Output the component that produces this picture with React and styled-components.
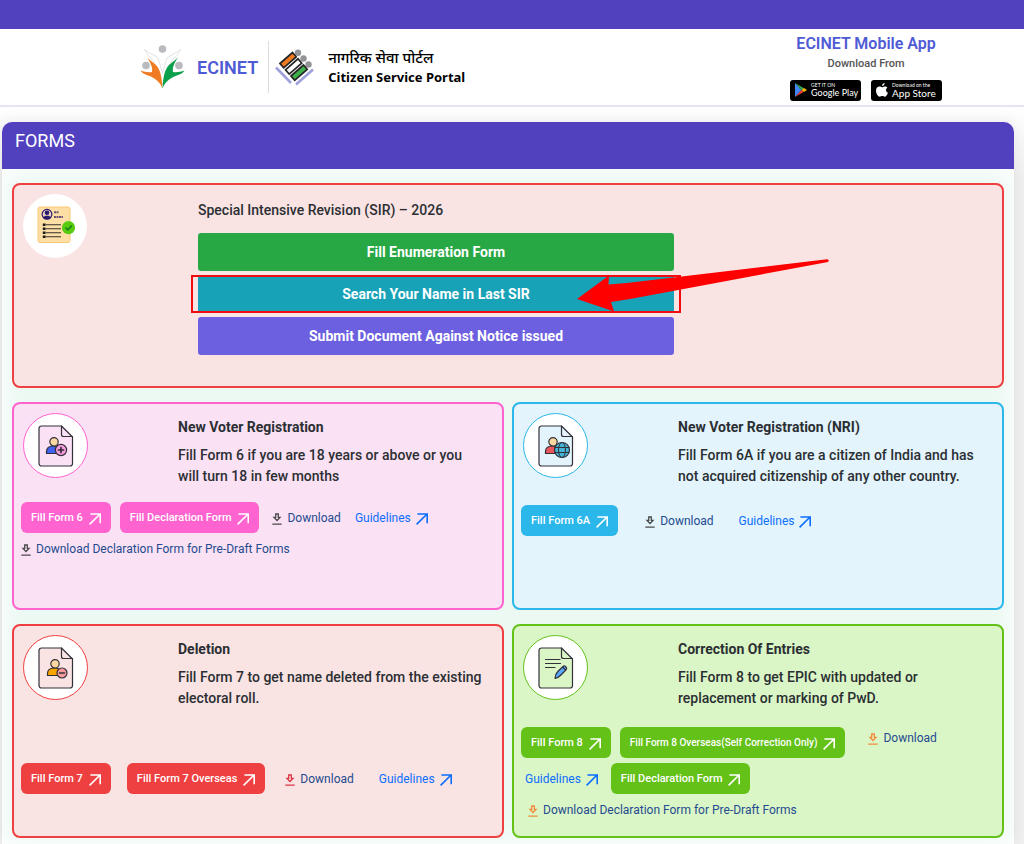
import React from "react";
import styled, { createGlobalStyle } from "styled-components";

const Global = createGlobalStyle`
  *, *::before, *::after { box-sizing: border-box; }
  body { margin: 0; background: linear-gradient(#fff 107px, #f0f0f0 180px) #f0f0f0; font-family: Roboto, "Liberation Sans", sans-serif; color: #2b2f33; }
  h1, h2, h3, p { margin: 0; }
  a { text-decoration: none; }
  svg { display: block; flex: none; }
`;

const TopBar = styled.div`
  height: 29px;
  background: #5141bf;
`;

const Header = styled.header`
  display: flex;
  justify-content: space-between;
  align-items: center;
  height: 78px;
  padding: 0 8% 0 140px;
  background: #fff;
  border-bottom: 2px solid #e4e4f2;
`;

const Brand = styled.div`
  display: flex;
  align-items: center;
`;

const BrandName = styled.a`
  display: flex;
  align-items: center;
  gap: 12px;
  height: 52px;
  padding-right: 10px;
  border-right: 1px solid #dcdce4;
  color: #4f5bd5;
  font-size: 18px;
  font-weight: 600;
`;

const Portal = styled.div`
  display: flex;
  align-items: center;
  gap: 14px;
  padding-left: 6px;
  color: #000;
`;

const PortalText = styled.div`
  font-family: "Noto Sans", "Liberation Sans", sans-serif;
  font-size: 13px;
  line-height: 20px;
  font-weight: 700;
`;

const Hindi = styled.p`
  font-size: 15px;
  font-weight: 500;
`;

const MobileApp = styled.div`
  display: flex;
  flex-direction: column;
  align-items: center;
  color: #555;
  font-size: 11px;
  line-height: 20px;
  font-weight: 500;
`;

const AppTitle = styled.h2`
  color: #4f5bd5;
  font-size: 16px;
  line-height: 20px;
  font-weight: 600;
`;

const Badges = styled.div`
  display: flex;
  gap: 10px;
  margin-top: 6px;
`;

const Badge = styled.a`
  display: flex;
  align-items: center;
  gap: 4px;
  width: 71px;
  height: 21px;
  padding-left: 5px;
  border-radius: 3px;
  background: #000;
  color: #fff;
  font-family: Lato, sans-serif;
  font-size: ${(p) => (p.$compact ? 9 : 10)}px;
  font-weight: 400;
  line-height: 10px;
  white-space: nowrap;
`;

const BadgeSmall = styled.span`
  display: block;
  font-size: 5px;
  line-height: 6px;
`;

const Panel = styled.main`
  margin: 15px 10px 0 2px;
  border-radius: 10px 10px 0 0;
  overflow: hidden;
  box-shadow: 0 0 16px rgba(0, 0, 0, 0.08);
`;

const PanelHead = styled.div`
  height: 47px;
  padding: 9px 13px;
  background: #5141bf;
  color: #fff;
`;

const PanelTitle = styled.h1`
  font-size: 18px;
  line-height: 20px;
  font-weight: 400;
`;

const PanelBody = styled.div`
  display: grid;
  grid-template-columns: 1fr 1fr;
  gap: 14px 8px;
  padding: 14px 10px 6px;
  background: #ecf9f3;
  box-shadow: inset 0 0 30px #fff;
`;

const Card = styled.section`
  min-height: ${(p) => p.$height}px;
  grid-column: ${(p) => (p.$wide ? "1 / -1" : "auto")};
  padding: 9px 7px;
  border: 2px solid ${(p) => p.$line};
  border-radius: 8px;
  background: ${(p) => p.$fill};
`;

const CardTop = styled.div`
  display: grid;
  grid-template-columns: ${(p) => p.$first}px 1fr;
  padding-left: 2px;
`;

const Circle = styled.div`
  display: grid;
  place-items: center;
  width: ${(p) => p.$size}px;
  height: ${(p) => p.$size}px;
  border-radius: 50%;
  border: 1px solid ${(p) => p.$line};
  background: #fff;
`;

const CardText = styled.div`
  display: flex;
  flex-direction: column;
  gap: 7px;
  padding: ${(p) => p.$top || 4}px 10px 0 0;
  font-size: 14px;
  line-height: 21px;
  font-weight: 500;
`;

const CardTitle = styled.h3`
  font-size: 14px;
  line-height: 21px;
  font-weight: ${(p) => (p.$light ? 500 : 700)};
`;

const SirStack = styled.div`
  display: flex;
  flex-direction: column;
  gap: 4px;
  width: 100%;
  max-width: 476px;
  margin-top: 5px;
`;

const SirButton = styled.button`
  width: 100%;
  height: 38px;
  border: 0;
  border-radius: 3px;
  background: ${(p) => p.$bg};
  color: #fff;
  font: 700 14px/21px Roboto, sans-serif;
`;

const Marked = styled.div`
  position: relative;
`;

const Outline = styled.span`
  position: absolute;
  inset: 0 -7px;
  border: 2px solid #f00b10;
  pointer-events: none;
`;

const Arrow = styled.svg`
  position: absolute;
  top: -17px;
  right: -157px;
  pointer-events: none;
`;

const Actions = styled.div`
  display: flex;
  flex-direction: column;
  gap: 5px;
  margin-top: ${(p) => p.$top}px;
`;

const Row = styled.div`
  display: flex;
  align-items: ${(p) => (p.$raised ? "flex-start" : "center")};
  gap: 9px;
`;

const FormButton = styled.button`
  display: flex;
  align-items: center;
  gap: 6px;
  height: 31px;
  margin-left: ${(p) => p.$lead || 0}px;
  padding: 0 10px;
  border: 0;
  border-radius: 6px;
  background: ${(p) => p.$bg};
  color: #fff;
  font: 500 ${(p) => (p.$small ? 10 : 11)}px/16px Roboto, sans-serif;
  white-space: nowrap;
`;

const TextLink = styled.a`
  display: flex;
  align-items: center;
  gap: 5px;
  margin-left: ${(p) => p.$lead || 0}px;
  color: ${(p) => (p.$bright ? "#0d6efd" : "#244b8f")};
  font-size: 12px;
  line-height: 22px;
  white-space: nowrap;
`;

const OutSvg = styled.svg`
  margin-top: 2px;
`;

const DownSvg = styled.svg`
  margin-top: 2px;
`;

const ArrowOut = () => (
  <OutSvg width="12" height="12" viewBox="0 0 12 12" fill="none" stroke="currentColor" strokeWidth="1.6">
    <path d="M.6 11.400 10.800 1.200M1.400 1h9.800v9.200" />
  </OutSvg>
);

const DownIcon = ({ color }) => (
  <DownSvg width="10" height="12" viewBox="0 0 10 12" fill="none" stroke={color} strokeWidth="1.3">
    <path d="M3.700 1h2.600v3.400h1.700L5 7.500 2 4.400h1.700zM.3 11.200h9.400" />
  </DownSvg>
);

const FileIcon = ({ tint, children }) => (
  <svg width="36" height="42" viewBox="0 0 36 42" fill="none" stroke="#33303a" strokeWidth="1.2" strokeLinejoin="round" strokeLinecap="round">
    <path d="M3.500 1h20L34.500 12v26.500a2.500 2.500 0 0 1-2.500 2.500H3.500A2.500 2.500 0 0 1 1 38.500V3.500A2.500 2.500 0 0 1 3.500 1z" fill={tint} />
    <path d="M23.500 1v8.500a2 2 0 0 0 2 2h9" />
    {children}
  </svg>
);

const Person = ({ body, x = 0 }) => (
  <g transform={`translate(${x} 0)`}>
    <path d="M8.500 28.500v-2c0-3.500 2.800-5.500 7-5.500s7 2 7 5.500v2z" fill={body} />
    <circle cx="16" cy="16.800" r="4.200" fill="#fbd9a0" />
  </g>
);

const AddVoter = () => (
  <FileIcon tint="#fbe1f4">
    <Person body="#3f62f0" />
    <circle cx="23" cy="25" r="5.600" fill="#f79bdc" />
    <path d="M20.500 25h5M23 22.500v5" strokeWidth="1.700" />
  </FileIcon>
);

const GlobeVoter = () => (
  <FileIcon tint="#e3f4fc">
    <Person body="#e9555a" x={-1} />
    <circle cx="24" cy="25" r="7.500" fill="#45b5d8" />
    <ellipse cx="24" cy="25" rx="3.500" ry="7.500" strokeWidth="1" />
    <path d="M17 22.500h14M17 27.500h14" strokeWidth="1" />
  </FileIcon>
);

const RemoveVoter = () => (
  <FileIcon tint="#fae3e3">
    <Person body="#f8a500" x={1} />
    <circle cx="24" cy="26" r="5" fill="#f89b9b" />
    <path d="M21.500 26h5" strokeWidth="1.500" />
  </FileIcon>
);

const EditEntries = () => (
  <FileIcon tint="#dbf6c6">
    <path d="M7.500 12.500H22M7.500 16.500h15M7.500 20.500H17" />
    <path d="M17 31.500c0-3 .8-5 2.800-7l5.200-5c1.500-1.500 4.800 1 3.300 3L23 28c-2 2-3.500 3-6 3.500zM24.500 20l3.200 3" fill="#5aa9f8" />
  </FileIcon>
);

const SirDoc = () => (
  <svg width="44" height="40" viewBox="-4 0 44 40">
    <rect x="1" y="1" width="32" height="35.500" rx="2" fill="#fddfa5" stroke="#fbc875" />
    <circle cx="10" cy="8.300" r="4.900" fill="#e9d3bd" stroke="#2a1a70" strokeWidth="1.200" />
    <circle cx="10" cy="6.700" r="2.300" fill="#2a1a70" />
    <path d="M6 11.500c1-2.500 7-2.500 8 0-2 2.300-6 2.300-8 0z" fill="#2a1a70" />
    <path d="M17 6.200h5M17 11h9" stroke="#6c5276" strokeWidth="2" strokeDasharray="2 .5" />
    <path d="M9 18.700h15M9 22.700h15M9 26.700h15M9 30.700h15" stroke="#33302c" strokeWidth="1.100" />
    <path d="M5.800 18.700h2.800M5.800 22.700h2.800M5.800 26.700h2.800M5.800 30.700h2.800" stroke="#1d1b19" strokeWidth="2.600" />
    <circle cx="31.500" cy="21.700" r="6.600" fill="#58cb10" />
    <path d="m28.500 21.500 2.300 2.300 4-4.200" fill="none" stroke="#17801a" strokeWidth="1.600" />
  </svg>
);

const EcinetLogo = () => (
  <svg width="45" height="44" viewBox="0 0 45 44">
    <g fill="#b9bbbe">
      <circle cx="22.500" cy="4" r="3.800" />
      <circle cx="6" cy="20.500" r="3.800" />
      <circle cx="39" cy="20.500" r="3.800" />
    </g>
    <path d="M4.500 4.500c5 4.500 10 5 13.500 8.500L22.500 28 27 13c3.500-3.500 8.500-4 13.500-8.500-3 7-8.500 9-10.500 15l-7.500 20-7.500-20c-2-6-7.500-8-10.500-15z" fill="#fff" stroke="#dcdcdc" strokeWidth=".8" />
    <path d="M7 12c4 5 9 6.500 11.500 11.500C21 28 22 35 22.500 43.500 20 37.500 16 33.500 9.500 31 5.500 29.500 3 29 .5 25.500c4 1.500 8 2 11.500 1.500 1-6-2.500-10-5-15z" fill="#ef7c22" />
    <path d="M38 12c-4 5-9 6.500-11.500 11.500C24 28 23 35 22.500 43.500c2.500-6 6.500-10 13-12.500 4-1.500 6.500-2 9-5.500-4 1.500-8 2-11.500 1.500-1-6 2.500-10 5-15z" fill="#0ba04b" />
  </svg>
);

const EciLogo = () => (
  <svg width="39" height="37" viewBox="0 0 39 37">
    <g fill="#929497">
      <circle cx="23" cy="3.800" r="3.200" />
      <circle cx="28.500" cy="9.500" r="3.200" />
      <circle cx="33.500" cy="15.500" r="3.200" />
    </g>
    <g stroke="#262626" strokeWidth="1.700">
      <path d="m5 14.500 12.500-11 3.700 4.300L8.700 18.800z" fill="#f07a20" />
      <path d="m10.500 20.800 12.500-11 3.700 4.300-12.500 11z" fill="#fff" />
      <path d="m16 27 12.500-11 3.700 4.300-12.500 11z" fill="#3faf4a" />
    </g>
    <path d="M1 18.500 16 34M21 35.500l17-15" stroke="#9fa1da" strokeWidth="2.600" />
  </svg>
);

const PlayMark = () => (
  <svg width="12" height="14" viewBox="0 0 12 14">
    <path d="M0 0v14l6.500-7z" fill="#4285f4" />
    <path d="M0 0l9 5.200L6.500 7z" fill="#34a853" />
    <path d="M9 5 12 7 9 9 6.500 7z" fill="#fbbc04" />
    <path d="M0 14l9-5.200L6.500 7z" fill="#ea4335" />
  </svg>
);

const AppleMark = () => (
  <svg width="12" height="14" viewBox="0 0 12 14" fill="#fff">
    <path d="M8.700 0c.1 1.500-1.200 3-2.700 3C5.900 1.500 7.200.2 8.700 0zM11.400 4.800c-2 1.200-1.700 4 .5 4.900C11.300 11.500 10 13.700 8.800 13.700c-1 0-1.300-.6-2.500-.6s-1.600.6-2.500.6C2 13.700 0 10.500 0 7.700 0 5 1.700 3.600 3.400 3.600c1.100 0 2 .7 2.700.7.700 0 1.700-.8 3-.8.900 0 1.700.4 2.300 1.300z" />
  </svg>
);

const Fill = ({ bg, lead, small, children }) => (
  <FormButton type="button" $bg={bg} $lead={lead} $small={small}>
    {children}
    <ArrowOut />
  </FormButton>
);

const Download = ({ color, lead, children = "Download" }) => (
  <TextLink href="#download" $lead={lead}>
    <DownIcon color={color} />
    {children}
  </TextLink>
);

const Guidelines = ({ lead }) => (
  <TextLink href="#guidelines" $bright $lead={lead}>
    Guidelines
    <ArrowOut />
  </TextLink>
);

const FormCard = ({ height, line, fill, icon, title, text, top, children }) => (
  <Card $height={height} $line={line} $fill={fill}>
    <CardTop $first={155}>
      <Circle $size={65} $line={line}>{icon}</Circle>
      <CardText>
        <CardTitle>{title}</CardTitle>
        <p>{text}</p>
      </CardText>
    </CardTop>
    <Actions $top={top}>{children}</Actions>
  </Card>
);

const PINK = "#ff63cf";
const BLUE = "#2bb7e9";
const RED = "#ef4041";
const GREEN = "#63c118";

export default function App() {
  return (
    <>
      <Global />
      <TopBar />
      <Header>
        <Brand>
          <BrandName href="#home">
            <EcinetLogo />
            ECINET
          </BrandName>
          <Portal>
            <EciLogo />
            <PortalText>
              <Hindi lang="hi">नागरिक सेवा पोर्टल</Hindi>
              <p>Citizen Service Portal</p>
            </PortalText>
          </Portal>
        </Brand>
        <MobileApp>
          <AppTitle>ECINET Mobile App</AppTitle>
          <p>Download From</p>
          <Badges>
            <Badge href="#google-play" $compact>
              <PlayMark />
              <span><BadgeSmall>GET IT ON</BadgeSmall>Google Play</span>
            </Badge>
            <Badge href="#app-store">
              <AppleMark />
              <span><BadgeSmall>Download on the</BadgeSmall>App Store</span>
            </Badge>
          </Badges>
        </MobileApp>
      </Header>
      <Panel>
        <PanelHead>
          <PanelTitle>FORMS</PanelTitle>
        </PanelHead>
        <PanelBody>
          <Card $wide $height={205} $line={RED} $fill="#fae3e3">
            <CardTop $first={175}>
              <Circle $size={64} $line="#fff"><SirDoc /></Circle>
              <CardText $top={6}>
                <CardTitle $light>Special Intensive Revision (SIR) – 2026</CardTitle>
                <SirStack>
                  <SirButton type="button" $bg="#28a745">Fill Enumeration Form</SirButton>
                  <Marked>
                    <SirButton type="button" $bg="#17a2b8">Search Your Name in Last SIR</SirButton>
                    <Outline />
                    <Arrow width="256" height="56" viewBox="0 0 256 56" fill="#fe0000">
                      <path d="M2 41 34 17.500 33.500 26.500 52 25 252 1.200Q255 1.500 253 4L55 41 36 44 39 53.500z" />
                    </Arrow>
                  </Marked>
                  <SirButton type="button" $bg="#6c5fe0">Submit Document Against Notice issued</SirButton>
                </SirStack>
              </CardText>
            </CardTop>
          </Card>

          <FormCard height={208} line={PINK} fill="#fbe1f4" icon={<AddVoter />} top={15}
            title="New Voter Registration"
            text="Fill Form 6 if you are 18 years or above or you will turn 18 in few months">
            <Row>
              <Fill bg={PINK}>Fill Form 6</Fill>
              <Fill bg={PINK}>Fill Declaration Form</Fill>
              <Download color="#4a4a4a" lead={4} />
              <Guidelines lead={5} />
            </Row>
            <Row>
              <Download color="#4a4a4a">Download Declaration Form for Pre-Draft Forms</Download>
            </Row>
          </FormCard>

          <FormCard height={208} line={BLUE} fill="#e3f4fc" icon={<GlobeVoter />} top={18}
            title="New Voter Registration (NRI)"
            text="Fill Form 6A if you are a citizen of India and has not acquired citizenship of any other country.">
            <Row>
              <Fill bg={BLUE}>Fill Form 6A</Fill>
              <Download color="#4a4a4a" lead={18} />
              <Guidelines lead={16} />
            </Row>
          </FormCard>

          <FormCard height={214} line={RED} fill="#fae3e3" icon={<RemoveVoter />} top={54}
            title="Deletion"
            text="Fill Form 7 to get name deleted from the existing electoral roll.">
            <Row>
              <Fill bg={RED}>Fill Form 7</Fill>
              <Fill bg={RED} lead={7}>Fill Form 7 Overseas</Fill>
              <Download color="#dc3545" lead={11} />
              <Guidelines lead={16} />
            </Row>
          </FormCard>

          <FormCard height={214} line={GREEN} fill="#dbf6c6" icon={<EditEntries />} top={18}
            title="Correction Of Entries"
            text="Fill Form 8 to get EPIC with updated or replacement or marking of PwD.">
            <Row $raised>
              <Fill bg={GREEN}>Fill Form 8</Fill>
              <Fill bg={GREEN} small>Fill Form 8 Overseas(Self Correction Only)</Fill>
              <Download color="#f08a3c" lead={14} />
            </Row>
            <Row>
              <Guidelines lead={4} />
              <Fill bg={GREEN} lead={4}>Fill Declaration Form</Fill>
            </Row>
            <Row>
              <Download color="#f08a3c" lead={7}>Download Declaration Form for Pre-Draft Forms</Download>
            </Row>
          </FormCard>
        </PanelBody>
      </Panel>
    </>
  );
}
